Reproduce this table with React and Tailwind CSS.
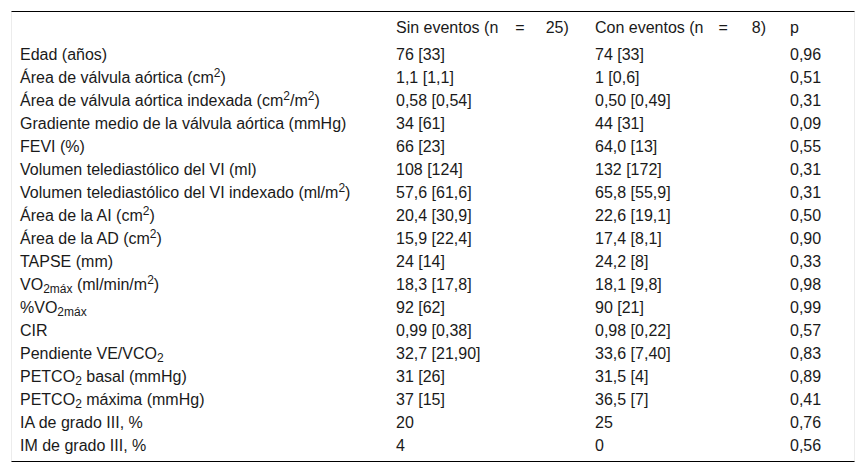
import React from "react";

const S = ({ children }) => <sup>{children}</sup>;
const B = ({ children }) => <sub>{children}</sub>;

const rows = [
  [<>Edad (años)</>, "76 [33]", "74 [33]", "0,96"],
  [<>Área de válvula aórtica (cm<S>2</S>)</>, "1,1 [1,1]", "1 [0,6]", "0,51"],
  [<>Área de válvula aórtica indexada (cm<S>2</S>/m<S>2</S>)</>, "0,58 [0,54]", "0,50 [0,49]", "0,31"],
  [<>Gradiente medio de la válvula aórtica (mmHg)</>, "34 [61]", "44 [31]", "0,09"],
  [<>FEVI (%)</>, "66 [23]", "64,0 [13]", "0,55"],
  [<>Volumen telediastólico del VI (ml)</>, "108 [124]", "132 [172]", "0,31"],
  [<>Volumen telediastólico del VI indexado (ml/m<S>2</S>)</>, "57,6 [61,6]", "65,8 [55,9]", "0,31"],
  [<>Área de la AI (cm<S>2</S>)</>, "20,4 [30,9]", "22,6 [19,1]", "0,50"],
  [<>Área de la AD (cm<S>2</S>)</>, "15,9 [22,4]", "17,4 [8,1]", "0,90"],
  [<>TAPSE (mm)</>, "24 [14]", "24,2 [8]", "0,33"],
  [<>VO<B>2máx</B> (ml/min/m<S>2</S>)</>, "18,3 [17,8]", "18,1 [9,8]", "0,98"],
  [<>%VO<B>2máx</B></>, "92 [62]", "90 [21]", "0,99"],
  [<>CIR</>, "0,99 [0,38]", "0,98 [0,22]", "0,57"],
  [<>Pendiente VE/VCO<B>2</B></>, "32,7 [21,90]", "33,6 [7,40]", "0,83"],
  [<>PETCO<B>2</B> basal (mmHg)</>, "31 [26]", "31,5 [4]", "0,89"],
  [<>PETCO<B>2</B> máxima (mmHg)</>, "37 [15]", "36,5 [7]", "0,41"],
  [<>IA de grado III, %</>, "20", "25", "0,76"],
  [<>IM de grado III, %</>, "4", "0", "0,56"],
];

const grid = "grid grid-cols-[376px_199px_195px_1fr]";

export default function App() {
  return (
    <div
      className="w-[866px] h-[474px] bg-white pt-[11px] pl-[11px] text-[#1a1a1a] text-[16px]"
      style={{ fontFamily: '"Liberation Sans", Arial, sans-serif' }}
    >
      <div className="w-[844px] border-x border-x-[#ececec] border-t border-t-black border-b border-b-black pb-[4px]">
        <div className={`${grid} h-[31px] items-center leading-[23px]`}>
          <div className="pl-2"></div>
          <div className="pl-2 whitespace-nowrap">
            Sin eventos (n<span className="ml-[17px]">=</span>
            <span className="ml-[21px]">25)</span>
          </div>
          <div className="pl-2 whitespace-nowrap">
            Con eventos (n<span className="ml-[15px]">=</span>
            <span className="ml-[24px]">8)</span>
          </div>
          <div className="pl-2">p</div>
        </div>
        {rows.map((r, i) => (
          <div key={i} className={`${grid} h-[23px] items-center leading-[23px] whitespace-nowrap`}>
            <div className="pl-2">{r[0]}</div>
            <div className="pl-2">{r[1]}</div>
            <div className="pl-2">{r[2]}</div>
            <div className="pl-2">{r[3]}</div>
          </div>
        ))}
      </div>
    </div>
  );
}
